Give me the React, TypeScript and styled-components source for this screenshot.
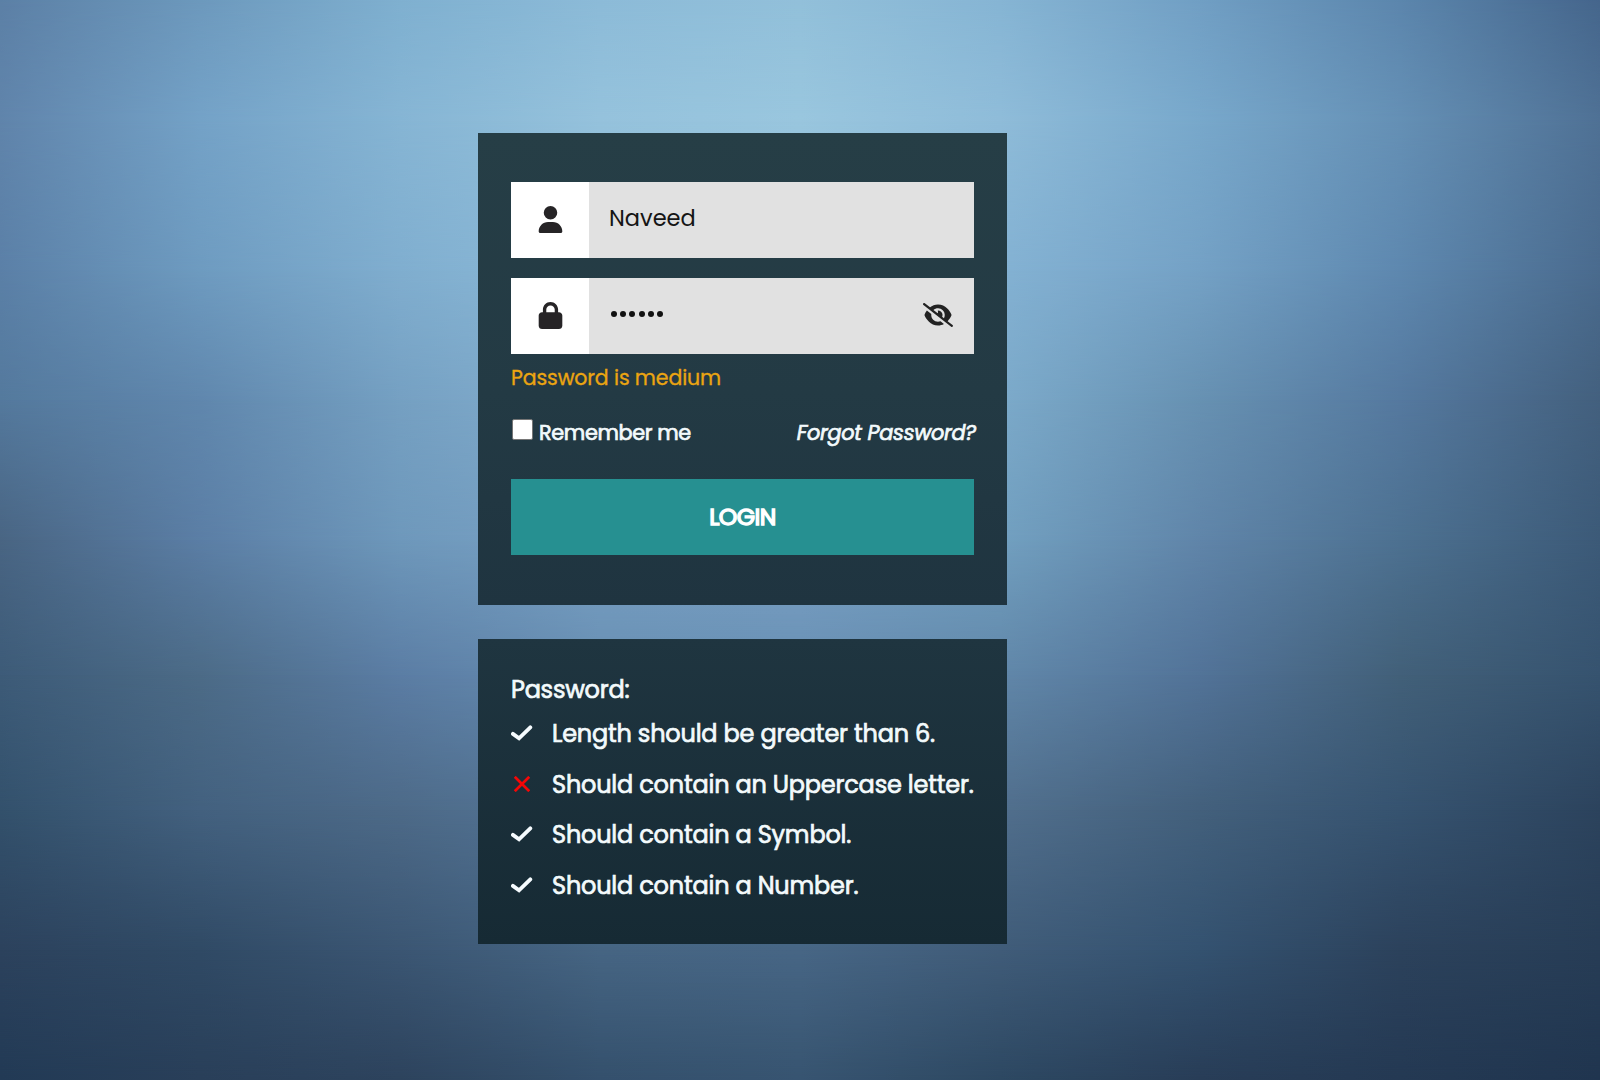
import React, { useState } from "react";
import styled, { createGlobalStyle, css } from "styled-components";
import { FaUser, FaLock, FaEyeSlash } from "react-icons/fa6";

const GlobalStyle = createGlobalStyle`
  * { box-sizing: border-box; }
  html, body { margin: 0; padding: 0; }
  body { overflow: hidden; background: #22344e; }
`;

const backdropRows = [
  { y: 0, colors: "#5c80a6,#6d99bd,#7fb0d0,#8cbbd8,#92c0da,#86b5d4,#719fc4,#5c86ad,#45668c" },
  { y: 120, colors: "#6084ab,#74a2c7,#86b5d4,#95c2dc,#99c6de,#8fbcd9,#78a8cb,#6590b5,#4f7195" },
  { y: 270, colors: "#5b80a7,#6e9bc0,#80aecf,#8cbad8,#90bedb,#84b2d3,#74a1c5,#5e88af,#4a6b8e" },
  { y: 400, colors: "#54799d,#6087ad,#75a0c2,#84afcf,#86b1d1,#7caaca,#6791b2,#55799f,#43607e" },
  { y: 540, colors: "#496583,#5b7ea5,#6e98bb,#7aa2c5,#7ba2c6,#72a0c0,#6085a9,#4d7191,#3c5a78" },
  { y: 675, colors: "#3d5b78,#4c6b87,#5b7da4,#678eb2,#688fb3,#6187a9,#527398,#426079,#36536f" },
  { y: 810, colors: "#33516c,#43617f,#4d6a88,#547698,#557799,#516f8d,#43607c,#365370,#2c435d" },
  { y: 950, colors: "#2c425d,#304a65,#3b5673,#466583,#476685,#405c79,#345270,#2c425c,#273d56" },
  { y: 1080, colors: "#223a55,#293f59,#2d435d,#34506c,#375470,#2d4862,#283d57,#243953,#20354f" },
];

const Page = styled.main`
  display: grid;
  width: 100vw;
  height: 100vh;
  font-family: Poppins, Inter, "Liberation Sans", sans-serif;
  color: #f3fafc;
`;

const BackdropLayer = styled.div<{ $colors: string; $from: number; $to: number }>`
  grid-area: 1 / 1;
  background: linear-gradient(90deg, ${(p) => p.$colors});
  ${(p) =>
    p.$to > 0 &&
    css`
      mask-image: linear-gradient(180deg, transparent ${p.$from}px, #000 ${p.$to}px);
    `}
`;

const Content = styled.div`
  grid-area: 1 / 1;
  z-index: 1;
  display: flex;
  flex-direction: column;
  gap: 34px;
  width: 529px;
  margin: 133px 0 0 478px;
`;

const LoginCard = styled.form`
  display: flex;
  flex-direction: column;
  height: 472px;
  padding: 49px 33px 50px;
  background: linear-gradient(180deg, #263e46, #233a44 55%, #1f3440);
`;

const RulesCard = styled.section`
  height: 305px;
  padding: 34px 33px 0;
  background: linear-gradient(180deg, #1f3540, #162a34);
`;

const Field = styled.label`
  display: flex;
  height: 76px;
  margin-bottom: 20px;
  background: #e1e1e1;
`;

const FieldIcon = styled.span`
  display: flex;
  align-items: center;
  justify-content: center;
  width: 78px;
  padding-bottom: 1px;
  background: #fff;
  color: #262426;
  font-size: 27px;
`;

const FieldInput = styled.input`
  flex: 1;
  min-width: 0;
  padding: 0 20px 4px;
  border: 0;
  outline: 0;
  background: transparent;
  color: #151515;
  font-family: inherit;
  font-size: 22.5px;
`;

const MaskedValue = styled.span`
  display: flex;
  flex: 1;
  align-items: center;
  gap: 3.4px;
  padding: 0 21.5px 4px;
`;

const MaskDot = styled.i`
  width: 6px;
  height: 6px;
  border-radius: 50%;
  background: #111;
`;

const RevealButton = styled.button`
  display: flex;
  align-items: center;
  padding: 0 21px 2px 0;
  border: 0;
  background: transparent;
  color: #222;
  font-size: 30px;
`;

const Text = styled.span<{ $size: number; $spacing?: number; $stroke?: number; $italic?: boolean }>`
  font-size: ${(p) => p.$size}px;
  font-weight: 400;
  font-style: ${(p) => (p.$italic ? "italic" : "normal")};
  letter-spacing: ${(p) => p.$spacing ?? 0}px;
  line-height: 34px;
  white-space: nowrap;
  -webkit-text-stroke: ${(p) => p.$stroke ?? 0.7}px currentColor;
`;

const Strength = styled.div`
  height: 34px;
  margin-top: -13px;
  color: #eba511;
`;

const Options = styled.div`
  display: flex;
  justify-content: space-between;
  align-items: flex-start;
  height: 34px;
  margin: 21px -2px 29px 0;
`;

const Remember = styled.label`
  display: flex;
  gap: 6px;
`;

const Check = styled.input`
  appearance: none;
  width: 21px;
  height: 21px;
  margin: 3px 0 0 1px;
  border: 1px solid #767676;
  border-radius: 2px;
  background: #fff;
`;

const LoginButton = styled.button`
  height: 76px;
  padding: 0;
  border: 0;
  background: #269091;
  color: #fff;
  font-family: inherit;
`;

const RuleList = styled.ul`
  margin: 10px 0 0;
  padding: 0;
  list-style: none;
`;

const Rule = styled.li`
  display: flex;
  align-items: center;
  gap: 18px;
  height: 34px;
  margin-bottom: 16.5px;
`;

const RuleIcon = styled.span<{ $ok: boolean }>`
  display: flex;
  flex-shrink: 0;
  justify-content: center;
  width: 23px;
  padding: 0 1px 2px 0;
  color: ${(p) => (p.$ok ? "#f6fcff" : "#f40707")};
`;

const Tick = () => (
  <svg width="23" height="18" viewBox="0 0 23 18" fill="none" stroke="currentColor" strokeWidth="4" strokeLinecap="round">
    <path d="M2 9.9L8.4 14.6L20.2 3" />
  </svg>
);

const Cross = () => (
  <svg width="16" height="16" viewBox="0 0 16 16" fill="none" stroke="currentColor" strokeWidth="2.7">
    <path d="M.8 .8l14.4 14.4M15.2 .8L.8 15.2" />
  </svg>
);

const rules = [
  { ok: true, text: "Length should be greater than 6." },
  { ok: false, text: "Should contain an Uppercase letter." },
  { ok: true, text: "Should contain a Symbol." },
  { ok: true, text: "Should contain a Number." },
];

export default function App() {
  const [name, setName] = useState("Naveed");
  return (
    <Page>
      <GlobalStyle />
      {backdropRows.map((row, i) => (
        <BackdropLayer key={row.y} $colors={row.colors} $from={i ? backdropRows[i - 1].y : 0} $to={row.y} />
      ))}
      <Content>
        <LoginCard onSubmit={(e) => e.preventDefault()}>
          <Field>
            <FieldIcon><FaUser /></FieldIcon>
            <FieldInput value={name} onChange={(e) => setName(e.target.value)} />
          </Field>
          <Field>
            <FieldIcon><FaLock /></FieldIcon>
            <MaskedValue>
              {Array.from({ length: 6 }, (_, i) => <MaskDot key={i} />)}
            </MaskedValue>
            <RevealButton type="button" aria-label="Show password"><FaEyeSlash /></RevealButton>
          </Field>
          <Strength><Text $size={20.5} $spacing={-0.12} $stroke={0.3}>Password is medium</Text></Strength>
          <Options>
            <Remember>
              <Check type="checkbox" />
              <Text $size={20.8} $spacing={-0.36}>Remember me</Text>
            </Remember>
            <Text $size={20.8} $spacing={-0.27} $italic>Forgot Password?</Text>
          </Options>
          <LoginButton><Text $size={23.5} $spacing={-0.5} $stroke={1.4}>LOGIN</Text></LoginButton>
        </LoginCard>
        <RulesCard>
          <Text $size={24} $spacing={-0.25}>Password:</Text>
          <RuleList>
            {rules.map((rule) => (
              <Rule key={rule.text}>
                <RuleIcon $ok={rule.ok}>{rule.ok ? <Tick /> : <Cross />}</RuleIcon>
                <Text $size={24} $spacing={-0.21}>{rule.text}</Text>
              </Rule>
            ))}
          </RuleList>
        </RulesCard>
      </Content>
    </Page>
  );
}
